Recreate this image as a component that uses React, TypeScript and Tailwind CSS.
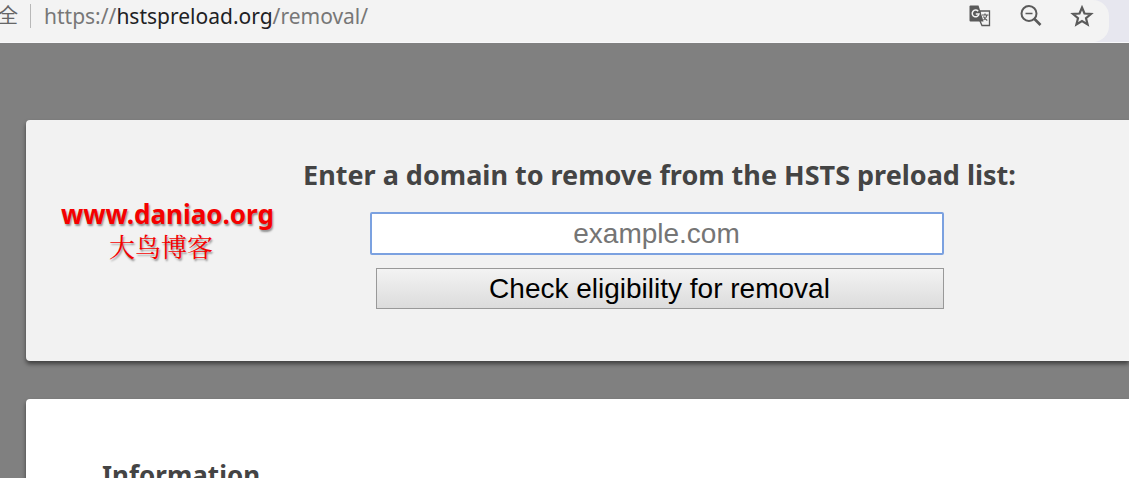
import React from "react";

function TranslateIcon() {
  return (
    <svg viewBox="0 0 24 24" className="size-6" aria-hidden="true">
      <path d="M12 7h9.5v14.5H14L12 17z" fill="#f3f3f3" stroke="#5a5a5a" strokeWidth="1.3" />
      <path d="M1.500 2.500Q1.500 1.500 2.500 1.500H10.500L15.500 17.500H2.500Q1.500 17.500 1.500 16.500z" fill="#5a5a5a" />
      <path d="M10.2 7.2A3.4 3.4 0 1 0 11 10H7.8" fill="none" stroke="#f3f3f3" strokeWidth="1.5" />
      <path d="M14 11h6.500M17 9.500V11M19 11c-.5 2.500-2 4-3.500 5M15.500 12.500c.8 1.800 2 3 3.800 4" fill="none" stroke="#5a5a5a" strokeWidth="1.2" />
    </svg>
  );
}

function ZoomOutIcon() {
  return (
    <svg viewBox="0 0 24 24" className="size-6" fill="none" stroke="#5a5a5a" strokeWidth="2" aria-hidden="true">
      <circle cx="10" cy="9.500" r="7.500" />
      <path d="M15 14.500l6.500 6.500" strokeWidth="2.600" />
      <path d="M6.500 9.500h7" strokeWidth="1.600" />
    </svg>
  );
}

function StarIcon() {
  return (
    <svg viewBox="0 0 24 24" className="size-6" fill="none" stroke="#5a5a5a" strokeWidth="2.200" aria-hidden="true">
      <path d="M12 3.500l2.500 6 6.500.5-5 4.200 1.600 6.300-5.600-3.400-5.600 3.400L8 14.200 3 10l6.500-.5z" />
    </svg>
  );
}

function AddressBar() {
  return (
    <header className="flex h-[43px] border-b border-[#f8f8fa] bg-[#e7e7ef]">
      <div className="mr-5 flex flex-1 items-start overflow-hidden rounded-r-2xl bg-[#f3f3f3]">
        <span className="-ml-[2px] mt-1 text-[20px] leading-6 text-[#666]">全</span>
        <span className="ml-[12px] mt-1 h-6 w-px bg-[#b8b8b8]" />
        <p className="ml-[13px] mt-[2px] flex-1 whitespace-nowrap font-['Noto_Sans','Noto_Sans_CJK_SC',sans-serif] text-[21px] leading-7 text-[#777]">
          https://<span className="text-[#202124]">hstspreload.org</span>/removal/
        </p>
        <div className="mr-[15px] mt-1 flex gap-[27px]">
          <button aria-label="Translate this page"><TranslateIcon /></button>
          <button aria-label="Zoom out"><ZoomOutIcon /></button>
          <button aria-label="Bookmark this page"><StarIcon /></button>
        </div>
      </div>
    </header>
  );
}

export default function App() {
  return (
    <div className="h-screen overflow-hidden bg-[#808080] font-['Noto_Sans','Noto_Sans_CJK_SC',sans-serif] text-[#444]">
      <AddressBar />
      <main className="ml-[26px] mt-[77px] flex flex-col gap-[38px]">
        <section className="flex items-start rounded-l-sm bg-[#f2f2f2] pb-[52px] pl-[35px] shadow-[0_3px_4px_rgba(0,0,0,0.5)]">
          <div className="mt-[78px] flex w-[214px] shrink-0 flex-col whitespace-nowrap text-[#f50000] [text-shadow:1px_2px_2px_rgba(0,0,0,0.4)]">
            <a href="#home" className="font-['Noto_Sans',sans-serif] text-[26px] font-bold leading-8">www.daniao.org</a>
            <span className="pl-12 font-['Noto_Serif_CJK_SC','Noto_Sans_CJK_SC',serif] text-[26px] leading-8">大鸟博客</span>
          </div>
          <form className="ml-7 flex w-[713px] shrink-0 flex-col items-center pt-[35px]" onSubmit={(e) => e.preventDefault()}>
            <label htmlFor="domain" className="whitespace-nowrap text-[27px] font-bold leading-10">
              Enter a domain to remove from the HSTS preload list:
            </label>
            <div className="flex w-full flex-col items-center gap-[13px] pr-[6px] pt-[17px]">
              <input
                id="domain"
                type="text"
                placeholder="example.com"
                className="h-[43px] w-[574px] rounded-xs border-2 border-[#7ba1e0] bg-white text-center font-['Liberation_Sans',sans-serif] text-[28px] text-black outline-none placeholder:text-[#757575]"
              />
              <div className="flex w-[574px] justify-end">
                <button
                  type="submit"
                  className="h-[41px] w-[568px] border border-[#999] bg-linear-to-b from-[#f3f3f3] to-[#dcdcdc] font-['Liberation_Sans',sans-serif] text-[28px] leading-8 text-black"
                >
                  Check eligibility for removal
                </button>
              </div>
            </div>
          </form>
        </section>
        <section className="rounded-l-sm bg-white px-[76px] pb-16 pt-14 shadow-[0_3px_4px_rgba(0,0,0,0.5)]">
          <h2 className="text-[26px] font-bold leading-10">Information</h2>
        </section>
      </main>
    </div>
  );
}
